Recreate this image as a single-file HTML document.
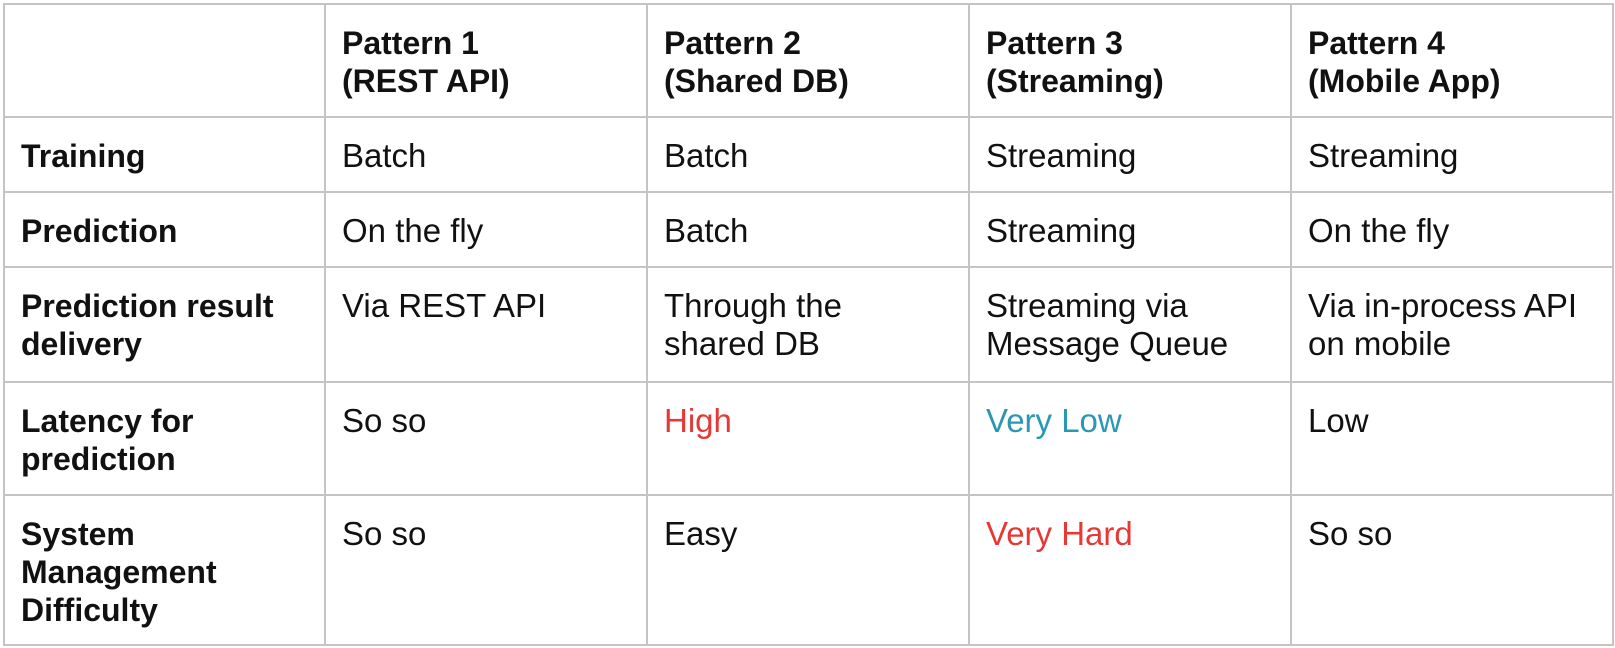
<!DOCTYPE html>
<html><head><meta charset="utf-8"><style>
html,body{margin:0;padding:0;background:#fff;width:1615px;height:648px;overflow:hidden}
table{position:absolute;left:3px;top:3px;border-collapse:collapse;table-layout:fixed;font-family:"Liberation Sans",Arial,sans-serif;font-size:33px;line-height:38px;color:#111;white-space:nowrap}
td{border:2px solid #c4c4c4;vertical-align:top;padding:19px 4px 0 16px;box-sizing:border-box;overflow:hidden}
td.h{font-weight:bold;font-size:32px}
.red{color:#e53935}.teal{color:#2b98b3}
</style></head><body>
<table>
<colgroup><col style="width:321px"><col style="width:322px"><col style="width:322px"><col style="width:322px"><col style="width:322px"></colgroup>
<tr style="height:113px"><td></td><td class="h">Pattern 1<br>(REST API)</td><td class="h">Pattern 2<br>(Shared DB)</td><td class="h">Pattern 3<br>(Streaming)</td><td class="h">Pattern 4<br>(Mobile App)</td></tr>
<tr style="height:75px"><td class="h">Training</td><td>Batch</td><td>Batch</td><td>Streaming</td><td>Streaming</td></tr>
<tr style="height:75px"><td class="h">Prediction</td><td>On the fly</td><td>Batch</td><td>Streaming</td><td>On the fly</td></tr>
<tr style="height:115px"><td class="h">Prediction result<br>delivery</td><td>Via REST API</td><td>Through the<br>shared DB</td><td>Streaming via<br>Message Queue</td><td>Via in-process API<br>on mobile</td></tr>
<tr style="height:113px"><td class="h">Latency for<br>prediction</td><td>So so</td><td class="red">High</td><td class="teal">Very Low</td><td>Low</td></tr>
<tr style="height:150px"><td class="h">System<br>Management<br>Difficulty</td><td>So so</td><td>Easy</td><td class="red">Very Hard</td><td>So so</td></tr>
</table>
</body></html>
